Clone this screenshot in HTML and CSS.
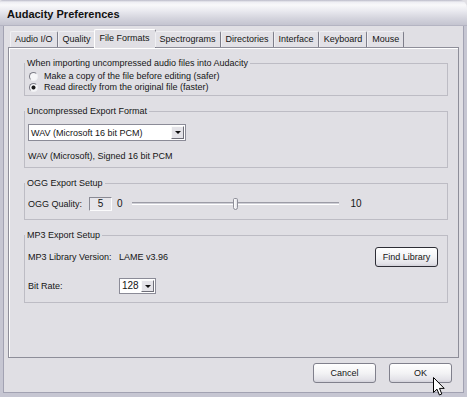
FILE: index.html
```html
<!DOCTYPE html>
<html>
<head>
<meta charset="utf-8">
<title>Audacity Preferences</title>
<link rel="stylesheet" href="styles.css">
</head>
<body>
<div class="window">
  <div class="titlebar"><span class="title">Audacity Preferences</span></div>
  <div class="frame">
    <div class="tabs">
      <div class="tab">Audio I/O</div>
      <div class="tab">Quality</div>
      <div class="tab active">File Formats</div>
      <div class="tab">Spectrograms</div>
      <div class="tab">Directories</div>
      <div class="tab">Interface</div>
      <div class="tab">Keyboard</div>
      <div class="tab">Mouse</div>
    </div>
    <div class="panel">
      <fieldset class="group g1">
        <legend>When importing uncompressed audio files into Audacity</legend>
        <div class="radio-row"><span class="radio"></span>Make a copy of the file before editing (safer)</div>
        <div class="radio-row"><span class="radio checked"></span>Read directly from the original file (faster)</div>
      </fieldset>
      <fieldset class="group g2">
        <legend>Uncompressed Export Format</legend>
        <div class="select wide"><span class="val">WAV (Microsoft 16 bit PCM)</span><span class="drop"><span class="arrow"></span></span></div>
        <div class="desc">WAV (Microsoft), Signed 16 bit PCM</div>
      </fieldset>
      <fieldset class="group g3">
        <legend>OGG Export Setup</legend>
        <div class="ogg-row">
          <span class="lbl-ogg">OGG Quality:</span>
          <span class="qbox">5</span>
          <span class="min">0</span>
          <div class="slider">
            <span class="track"></span>
            <span class="thumb"></span>
            <span class="track"></span>
          </div>
          <span class="max">10</span>
        </div>
      </fieldset>
      <fieldset class="group g4">
        <legend>MP3 Export Setup</legend>
        <div class="mp3-row">
          <span class="lbl-mp3">MP3 Library Version:</span>
          <span class="value">LAME v3.96</span>
          <button class="btn find">Find Library</button>
        </div>
        <div class="mp3-row rate">
          <span class="lbl-mp3">Bit Rate:</span>
          <div class="select small"><span class="val">128</span><span class="drop"><span class="arrow"></span></span></div>
        </div>
      </fieldset>
    </div>
    <div class="footer">
      <button class="btn">Cancel</button>
      <button class="btn">OK</button>
    </div>
  </div>
  <svg class="cursor" width="13" height="20" viewBox="0 0 13 20">
    <path d="M0.5 0.5 L0.5 15.5 L4 12.2 L6.4 18 L8.8 17 L6.5 11.4 L11.2 11.4 Z" fill="#fff" stroke="#000" stroke-width="1" stroke-linejoin="round"/>
  </svg>
</div>
</body>
</html>
```
FILE: styles.css
```css
html, body {
  margin: 0;
  padding: 0;
}
body {
  width: 467px;
  height: 397px;
  overflow: hidden;
  background: #ffffff;
  font-family: "Liberation Sans", Arial, sans-serif;
  font-size: 9px;
  line-height: 12px;
  color: #151515;
}
.window {
  position: relative;
  width: 467px;
  height: 397px;
  display: flex;
  flex-direction: column;
  background: #e0dfe4;
}
.titlebar {
  flex: none;
  height: 26px;
  box-sizing: border-box;
  padding: 3px 0 0 7px;
  display: flex;
  align-items: center;
  border-radius: 3px 8px 0 0;
  border-bottom: 1px solid #b4b4c2;
  background: linear-gradient(to bottom, #b9b9c8 0px, #eeeef3 2px, #f8f8fa 5px, #e9e9ef 11px, #d5d5de 18px, #c4c4d0 25px);
}
.title {
  font-weight: bold;
  font-size: 11px;
  color: #111;
}
.frame {
  flex: 1;
  display: flex;
  flex-direction: column;
  border: 3px solid #c6c6d2;
  border-top: 0;
  border-bottom-width: 4px;
  box-shadow: inset 1px 0 #a2a2b2, inset -1px 0 #a2a2b2, inset 0 -1px #a2a2b2;
  padding: 3px 5px 0;
  min-height: 0;
}
.tabs {
  display: flex;
  align-items: flex-end;
  height: 18px;
  padding-left: 2px;
  position: relative;
  z-index: 1;
  flex: none;
}
.tab {
  height: 16px;
  box-sizing: border-box;
  padding: 0 4px;
  line-height: 14px;
  border-top: 1px solid #f0f0f3;
  border-left: 1px solid #f0f0f3;
  border-right: 1px solid #7e7e8a;
  border-radius: 2px 2px 0 0;
  white-space: nowrap;
  background: #e2e1e6;
}
.tab.active {
  height: 19px;
  margin: 0 -1px -1px -2px;
  padding: 1px 5px 0;
  background: #e0dfe4;
  border-top-color: #ffffff;
  border-left-color: #ffffff;
}
.panel {
  flex: none;
  height: 311px;
  box-sizing: border-box;
  border: 1px solid #8e8e99;
  box-shadow: inset 1px 1px #ffffff;
  padding: 9px 10px 0 15px;
}
.group {
  margin: 0;
  min-width: 0;
  border: 1px solid #bdbcc4;
  padding: 2px 3px;
}
.group legend {
  padding: 0 2px;
  margin-left: -3px;
  line-height: 12px;
}
.g2 { margin-top: 9px; padding: 7px 3px 5px; }
.g3 { margin-top: 9px; padding: 7px 3px 8px; }
.g4 { margin-top: 9px; padding: 6px 3px 8px; }

.radio-row {
  display: flex;
  align-items: center;
  height: 11px;
  line-height: 11px;
}
.radio {
  width: 9px;
  height: 9px;
  box-sizing: border-box;
  border-radius: 50%;
  border: 1px solid;
  border-color: #7c7c86 #f0f0f3 #f0f0f3 #7c7c86;
  background: #f6f6f8;
  margin: 0 6px 0 1px;
  flex: none;
}
.radio.checked {
  background: radial-gradient(circle, #1a1a1a 0, #1a1a1a 1.6px, #f6f6f8 2.4px);
}

.select {
  display: flex;
  align-items: center;
  box-sizing: border-box;
  background: #ffffff;
  border: 1px solid #8b8b97;
  padding: 1px 1px 1px 2px;
}
.select.wide { width: 158px; height: 17px; }
.select.small { width: 37px; height: 16px; }
.select .val { flex: 1; white-space: nowrap; line-height: 12px; }
.select.small .val { font-size: 10px; }
.drop {
  width: 13px;
  height: 100%;
  box-sizing: border-box;
  background: #e4e3e8;
  border: 1px solid;
  border-color: #fafafa #6e6e78 #6e6e78 #fafafa;
  display: flex;
  align-items: center;
  justify-content: center;
}
.arrow {
  width: 0;
  height: 0;
  border-left: 3px solid transparent;
  border-right: 3px solid transparent;
  border-top: 3px solid #111;
}
.desc {
  margin-top: 9px;
  line-height: 12px;
}

.ogg-row {
  display: flex;
  align-items: center;
  height: 15px;
}
.lbl-ogg { width: 61px; flex: none; }
.qbox {
  width: 23px;
  height: 14px;
  box-sizing: border-box;
  border: 1px solid;
  border-color: #8a8a94 #fbfbfc #fbfbfc #8a8a94;
  background: #e6e5ea;
  text-align: center;
  line-height: 12px;
  font-size: 10px;
}
.min { margin-left: 5px; font-size: 10px; }
.slider {
  margin-left: 9px;
  width: 207px;
  height: 13px;
  display: flex;
  align-items: center;
}
.track {
  flex: 1;
  height: 1px;
  border-top: 1px solid #9c9ca6;
  border-bottom: 1px solid #ffffff;
  background: #cfcfd6;
}
.thumb {
  width: 5px;
  height: 12px;
  box-sizing: border-box;
  border: 1px solid #8f8f99;
  border-radius: 2px 2px 3px 3px;
  background: linear-gradient(to right, #ffffff, #e2e2e8);
}
.max { margin-left: 12px; font-size: 10px; }

.mp3-row {
  display: flex;
  align-items: center;
  height: 20px;
}
.mp3-row.rate {
  margin-top: 11px;
  height: 16px;
}
.lbl-mp3 { width: 91px; flex: none; }
.btn {
  width: 63px;
  height: 20px;
  box-sizing: border-box;
  padding: 0;
  margin: 0;
  font-family: inherit;
  font-size: 9px;
  color: #151515;
  border: 1px solid #80808c;
  border-radius: 3px;
  background: linear-gradient(to bottom, #ffffff 0%, #f3f3f5 50%, #e4e3e9 85%, #d3d2da 100%);
}
.btn.find {
  margin-left: auto;
  margin-right: 6px;
  border-color: #2e2e36;
}
.footer {
  display: flex;
  justify-content: flex-end;
  gap: 13px;
  margin-top: 5px;
  padding-right: 7px;
}
.cursor {
  position: absolute;
  left: 433px;
  top: 377px;
}
```
